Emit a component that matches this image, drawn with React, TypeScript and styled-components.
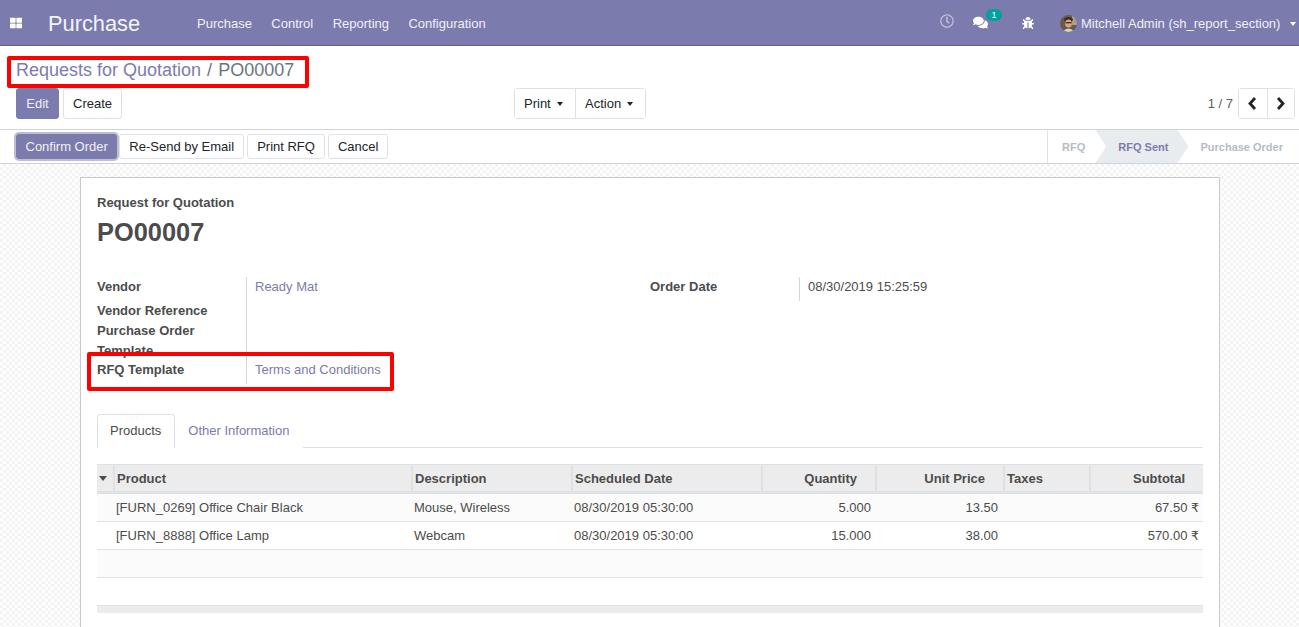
import styled, { createGlobalStyle } from 'styled-components';
import { FaThLarge, FaComments, FaBug, FaRegClock } from 'react-icons/fa';

const GlobalStyle = createGlobalStyle`
	html, body {
		margin: 0;
		height: 100%;
		overflow: hidden;
	}
	body {
		font-family: "Liberation Sans", Arial, sans-serif;
		font-size: 13px;
		color: #4c4c4c;
		background: #fff;
	}
`;

const Page = styled.div`
	display: flex;
	flex-direction: column;
	height: 627px;
	overflow: hidden;
`;

const Navbar = styled.header`
	display: flex;
	align-items: center;
	flex: none;
	box-sizing: border-box;
	height: 46px;
	padding: 2px 0 0 10px;
	background: #7c7bad;
	border-bottom: 1px solid #5f5e97;
	color: #fff;
`;

const AppsIcon = styled.span`
	display: flex;
	width: 38px;
	margin-bottom: 2px;
	font-size: 12px;
`;

const Brand = styled.span`
	width: 149px;
	font-size: 21.8px;
	color: #f4f4f8;
`;

const NavMenu = styled.nav`
	display: flex;
	gap: 19.4px;
	flex: 1;
	color: #f0f0f6;
`;

const NavIcons = styled.div`
	display: flex;
	align-items: center;
	color: #fff;
`;

const ClockIcon = styled.span`
	display: flex;
	width: 33px;
	margin-bottom: 5px;
	font-size: 14px;
	color: #c0bfd8;
`;

const Chat = styled.span`
	position: relative;
	display: flex;
	width: 49px;
	margin-bottom: 2px;
	font-size: 15px;
`;

const Badge = styled.span`
	position: absolute;
	top: -6px;
	left: 13px;
	width: 16px;
	height: 12px;
	border-radius: 6px;
	background: #00a09d;
	font-size: 9px;
	line-height: 12px;
	text-align: center;
`;

const BugIcon = styled.span`
	display: flex;
	width: 38px;
	margin-bottom: 2px;
	font-size: 12px;
`;

const UserMenu = styled.span`
	display: flex;
	align-items: center;
	gap: 4px;
	width: 239px;
	color: #f0f0f6;
`;

const Caret = styled.span<{ $color?: string }>`
	display: inline-block;
	width: 0;
	height: 0;
	margin-left: 6px;
	border-top: 4px solid ${({ $color }) => $color || '#212529'};
	border-left: 3.5px solid transparent;
	border-right: 3.5px solid transparent;
	vertical-align: 2px;
`;

const ControlPanel = styled.section`
	flex: none;
	box-sizing: border-box;
	height: 84px;
	padding: 10px 4px 0 16px;
	border-bottom: 1px solid #ced4da;
`;

const Breadcrumb = styled.div`
	position: relative;
	height: 32px;
	font-size: 18px;
	line-height: 29px;
	color: #6c757d;
`;

const BreadcrumbLink = styled.span`
	color: #7c7bad;
`;

const Separator = styled.span`
	margin: 0 6px;
`;

const Highlight = styled.span<{ $top: number; $left: number; $width: number; $height: number }>`
	position: absolute;
	top: ${({ $top }) => $top}px;
	left: ${({ $left }) => $left}px;
	width: ${({ $width }) => $width}px;
	height: ${({ $height }) => $height}px;
	box-sizing: border-box;
	border: 4px solid #ff0000;
	border-radius: 2px;
	pointer-events: none;
`;

const PanelRow = styled.div`
	display: grid;
	grid-template-columns: 498px 1fr auto;
	align-items: center;
`;

const ButtonRow = styled.div<{ $gap?: number }>`
	display: flex;
	gap: ${({ $gap }) => $gap ?? 4}px;
`;

const Button = styled.button<{ $primary?: boolean; $focused?: boolean; $height?: number }>`
	box-sizing: border-box;
	min-width: 43px;
	height: ${({ $height }) => $height ?? 31}px;
	padding: 0 ${({ $focused }) => ($focused ? 8.5 : 9)}px;
	margin-right: ${({ $focused }) => ($focused ? -1 : 0)}px;
	border: 1px solid ${({ $primary }) => ($primary ? '#7c7bad' : '#dee2e6')};
	border-radius: 3px;
	background: ${({ $primary }) => ($primary ? '#7c7bad' : '#fff')};
	color: ${({ $primary }) => ($primary ? '#f0f0f6' : '#212529')};
	font: inherit;
	box-shadow: ${({ $focused }) => ($focused ? '0 0 0 2px #bdbdd6' : 'none')};
`;

const Group = styled.div`
	display: flex;
	width: max-content;
	border: 1px solid #dee2e6;
	border-radius: 3px;
`;

const GroupButton = styled.button<{ $width: number }>`
	box-sizing: border-box;
	width: ${({ $width }) => $width}px;
	height: 29px;
	padding: 0 0 0 9px;
	border: 0;
	background: #fff;
	color: #212529;
	font: inherit;
	text-align: left;

	& + & {
		border-left: 1px solid #dee2e6;
	}
`;

const Pager = styled.div`
	display: flex;
	align-items: center;
	gap: 5px;
	color: #5c5c5c;
`;

const PagerButton = styled.button`
	display: flex;
	align-items: center;
	justify-content: center;
	width: 27.5px;
	height: 29px;
	padding: 0;
	border: 0;
	background: #fff;
	color: #212529;

	& + & {
		border-left: 1px solid #dee2e6;
	}
`;

const StatusBar = styled.section`
	display: flex;
	align-items: center;
	justify-content: space-between;
	flex: none;
	box-sizing: border-box;
	height: 34px;
	padding-left: 16px;
	border-bottom: 1px solid #ced4da;
`;

const Steps = styled.div`
	display: flex;
	align-self: stretch;
	border-left: 1px solid #dee2e6;
`;

const Step = styled.span<{ $active?: boolean; $pad: string }>`
	display: flex;
	align-items: center;
	padding: ${({ $pad }) => $pad};
	font-size: 11px;
	font-weight: bold;
	color: ${({ $active }) => ($active ? '#7c7bad' : '#b6bcc6')};
	background: ${({ $active }) => ($active ? '#e9ecef' : 'transparent')};
	clip-path: ${({ $active }) =>
		$active ? 'polygon(0 0, calc(100% - 11px) 0, 100% 50%, calc(100% - 11px) 100%, 0 100%, 11px 50%)' : 'none'};
`;

const Content = styled.main`
	flex: 1;
	padding: 13px 79px 0 80px;
	background-color: #fff;
	background-image: conic-gradient(#f3f3f3 25%, transparent 0 50%, #f3f3f3 0 75%, transparent 0);
	background-size: 6px 6px;
`;

const Sheet = styled.article`
	box-sizing: border-box;
	height: 500px;
	padding: 16px 16px 0;
	background: #fff;
	border: 1px solid #c8c8d3;
`;

const SheetKind = styled.div`
	font-weight: bold;
	line-height: 18px;
`;

const Title = styled.h1`
	margin: 4px 0 29px;
	font-size: 25.4px;
	line-height: 32px;
	color: #4c4c4c;
`;

const InfoColumns = styled.div`
	display: grid;
	grid-template-columns: 553px 1fr;
	height: 107px;
`;

const InfoGroup = styled.div`
	position: relative;
	display: grid;
	grid-template-columns: 149px 1fr;
	align-content: start;
	height: 107px;
`;

const Label = styled.div<{ $height: number }>`
	box-sizing: border-box;
	height: ${({ $height }) => $height}px;
	padding-right: 16px;
	font-weight: bold;
	line-height: 20px;
	overflow: hidden;
`;

const Value = styled.div<{ $height: number; $link?: boolean }>`
	box-sizing: border-box;
	height: ${({ $height }) => $height}px;
	padding-left: 8px;
	border-left: 1px solid #d6d6d6;
	line-height: 20px;
	color: ${({ $link }) => ($link ? '#7c7bad' : '#4c4c4c')};
`;

const Tabs = styled.div`
	display: flex;
	margin-top: 30px;
	height: 33px;
	border-bottom: 1px solid #dee2e6;
`;

const Tab = styled.span<{ $active?: boolean }>`
	box-sizing: border-box;
	height: 34px;
	padding: 0 13px 0 12px;
	line-height: 32px;
	color: ${({ $active }) => ($active ? '#4c4c4c' : '#7c7bad')};
	background: #fff;
	border: 1px solid ${({ $active }) => ($active ? '#dee2e6' : 'transparent')};
	border-bottom: 0;
	border-radius: 3px 3px 0 0;
`;

const COLUMNS = '16px 298px 160px 190px 114px 128px 86px 114px';

const TableHead = styled.div`
	display: grid;
	grid-template-columns: ${COLUMNS};
	height: 30px;
	margin-top: 16px;
	box-sizing: border-box;
	background: #ececec;
	border-top: 1px solid #dee2e6;
	border-bottom: 3px solid #dee2e6;
`;

const HeadCell = styled.div<{ $right?: boolean }>`
	display: flex;
	align-items: center;
	justify-content: ${({ $right }) => ($right ? 'flex-end' : 'flex-start')};
	box-sizing: border-box;
	padding: ${({ $right }) => ($right ? '0 18px 0 2px' : '0 2px')};
	border-left: 2px solid #dee2e6;
	font-weight: bold;
	white-space: nowrap;

	&:first-child {
		border-left: 0;
	}
`;

const SortCaret = styled.span`
	width: 0;
	height: 0;
	border-top: 5px solid #4c4c4c;
	border-left: 4.5px solid transparent;
	border-right: 4.5px solid transparent;
`;

const TableRow = styled.div<{ $odd?: boolean }>`
	display: grid;
	grid-template-columns: ${COLUMNS};
	box-sizing: border-box;
	height: 28px;
	background: ${({ $odd }) => ($odd ? '#fbfbfb' : '#fff')};
	border-bottom: 1px solid #dee2e6;
`;

const Cell = styled.div<{ $right?: boolean; $pad?: number }>`
	padding: 0 ${({ $pad }) => $pad ?? 4}px 0 3px;
	line-height: 28px;
	text-align: ${({ $right }) => ($right ? 'right' : 'left')};
	white-space: nowrap;
`;

const Rupee = styled.span`
	font-family: "DejaVu Sans", sans-serif;
	font-size: 12.5px;
`;

const TableFoot = styled.div`
	height: 7px;
	background: #ececec;
`;

const Avatar = () => (
	<svg width="17" height="17" viewBox="0 0 17 17">
		<clipPath id="avatar-clip">
			<circle cx="8.5" cy="8.5" r="8.5" />
		</clipPath>
		<g clipPath="url(#avatar-clip)">
			<rect width="17" height="17" fill="#6b5a4c" />
			<rect x="12" width="5" height="10" fill="#a8a08f" />
			<path d="M4 4 Q8 0 13 4 L12 7 L5 7 Z" fill="#3a2a20" />
			<ellipse cx="8.5" cy="8.5" rx="3.4" ry="4" fill="#d3a58a" />
			<rect x="5.5" y="7" width="6" height="1.4" fill="#4a3028" />
			<path d="M2 17 Q8.5 10 15 17 Z" fill="#d8d4cc" />
		</g>
	</svg>
);

const Chevron = ({ points }: { points: string }) => (
	<svg width="9" height="13" viewBox="0 0 9 13">
		<polyline points={points} fill="none" stroke="currentColor" strokeWidth="2.8" />
	</svg>
);

const rows = [
	{ product: '[FURN_0269] Office Chair Black', desc: 'Mouse, Wireless', date: '08/30/2019 05:30:00', qty: '5.000', price: '13.50', total: '67.50' },
	{ product: '[FURN_8888] Office Lamp', desc: 'Webcam', date: '08/30/2019 05:30:00', qty: '15.000', price: '38.00', total: '570.00' },
];

export default function App() {
	return (
		<Page>
			<GlobalStyle />
			<Navbar>
				<AppsIcon><FaThLarge /></AppsIcon>
				<Brand>Purchase</Brand>
				<NavMenu>
					<span>Purchase</span>
					<span>Control</span>
					<span>Reporting</span>
					<span>Configuration</span>
				</NavMenu>
				<NavIcons>
					<ClockIcon><FaRegClock /></ClockIcon>
					<Chat>
						<FaComments />
						<Badge>1</Badge>
					</Chat>
					<BugIcon><FaBug /></BugIcon>
					<UserMenu>
						<Avatar />
						<span>Mitchell Admin (sh_report_section)</span>
						<Caret $color="#fff" />
					</UserMenu>
				</NavIcons>
			</Navbar>

			<ControlPanel>
				<Breadcrumb>
					<BreadcrumbLink>Requests for Quotation</BreadcrumbLink>
					<Separator>/</Separator>
					PO00007
					<Highlight $top={0} $left={-9} $width={302} $height={32} />
				</Breadcrumb>
				<PanelRow>
					<ButtonRow>
						<Button $primary>Edit</Button>
						<Button>Create</Button>
					</ButtonRow>
					<Group>
						<GroupButton $width={60}>Print<Caret /></GroupButton>
						<GroupButton $width={70}>Action<Caret /></GroupButton>
					</Group>
					<Pager>
						<span>1 / 7</span>
						<Group>
							<PagerButton><Chevron points="7,1 2,6.5 7,12" /></PagerButton>
							<PagerButton><Chevron points="2,1 7,6.5 2,12" /></PagerButton>
						</Group>
					</Pager>
				</PanelRow>
			</ControlPanel>

			<StatusBar>
				<ButtonRow $gap={3}>
					<Button $primary $focused $height={25}>Confirm Order</Button>
					<Button $height={25}>Re-Send by Email</Button>
					<Button $height={25}>Print RFQ</Button>
					<Button $height={25}>Cancel</Button>
				</ButtonRow>
				<Steps>
					<Step $pad="0 10px 0 14px">RFQ</Step>
					<Step $active $pad="0 20px 0 23px">RFQ Sent</Step>
					<Step $pad="0 16px 0 12px">Purchase Order</Step>
				</Steps>
			</StatusBar>

			<Content>
				<Sheet>
					<SheetKind>Request for Quotation</SheetKind>
					<Title>PO00007</Title>
					<InfoColumns>
						<InfoGroup>
							<Label $height={24}>Vendor</Label>
							<Value $height={24} $link>Ready Mat</Value>
							<Label $height={20}>Vendor Reference</Label>
							<Value $height={20} />
							<Label $height={39}>Purchase Order Template</Label>
							<Value $height={39} />
							<Label $height={24}>RFQ Template</Label>
							<Value $height={24} $link>Terms and Conditions</Value>
							<Highlight $top={75} $left={-10} $width={307} $height={39} />
						</InfoGroup>
						<InfoGroup>
							<Label $height={24}>Order Date</Label>
							<Value $height={24}>08/30/2019 15:25:59</Value>
						</InfoGroup>
					</InfoColumns>

					<Tabs>
						<Tab $active>Products</Tab>
						<Tab>Other Information</Tab>
					</Tabs>

					<TableHead>
						<HeadCell><SortCaret /></HeadCell>
						<HeadCell>Product</HeadCell>
						<HeadCell>Description</HeadCell>
						<HeadCell>Scheduled Date</HeadCell>
						<HeadCell $right>Quantity</HeadCell>
						<HeadCell $right>Unit Price</HeadCell>
						<HeadCell>Taxes</HeadCell>
						<HeadCell $right>Subtotal</HeadCell>
					</TableHead>
					{rows.map((row, i) => (
						<TableRow key={row.product} $odd={i % 2 === 0}>
							<Cell />
							<Cell>{row.product}</Cell>
							<Cell>{row.desc}</Cell>
							<Cell>{row.date}</Cell>
							<Cell $right>{row.qty}</Cell>
							<Cell $right $pad={5}>{row.price}</Cell>
							<Cell />
							<Cell $right>{row.total} <Rupee>₹</Rupee></Cell>
						</TableRow>
					))}
					<TableRow $odd />
					<TableRow />
					<TableFoot />
				</Sheet>
			</Content>
		</Page>
	);
}
